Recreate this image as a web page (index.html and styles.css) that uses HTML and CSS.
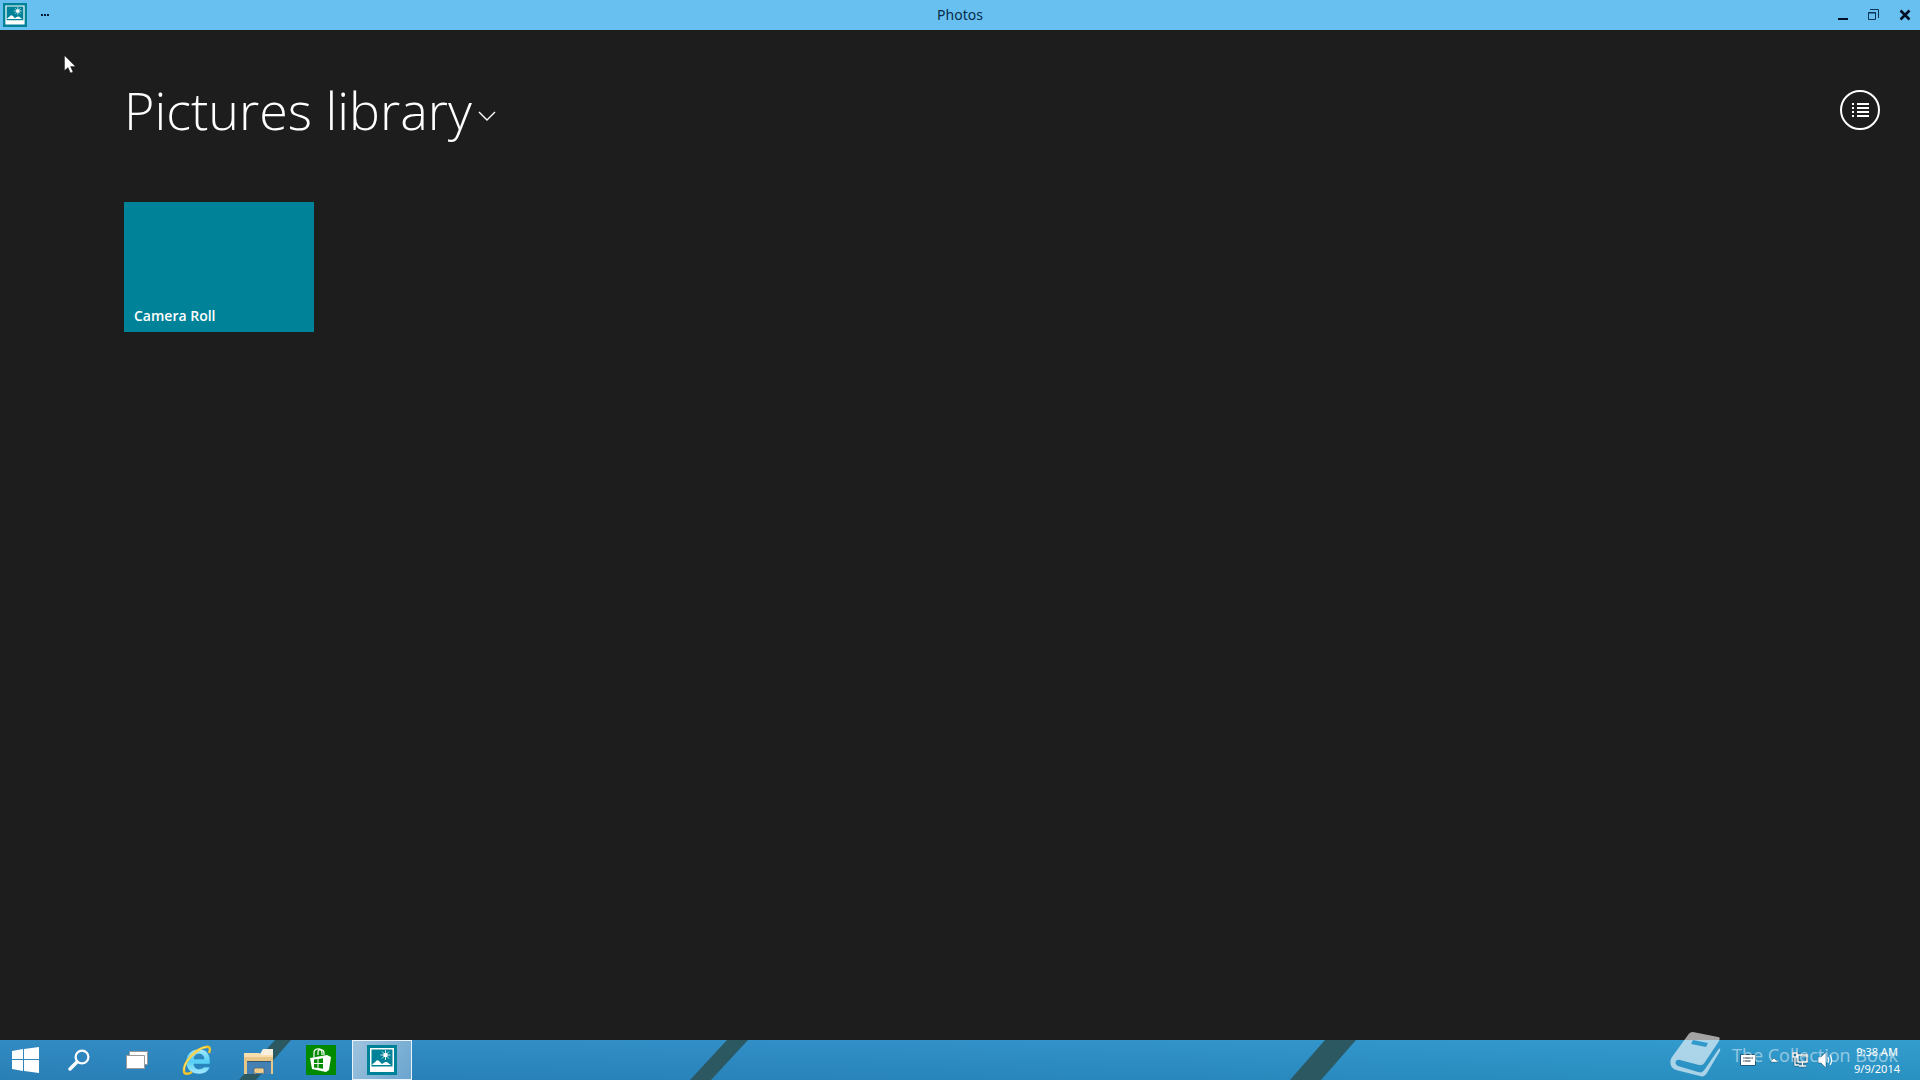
FILE: index.html
```html
<!DOCTYPE html>
<html lang="en">
<head>
    <meta charset="UTF-8">
    <meta name="viewport" content="width=device-width, initial-scale=1.0">
    <title>Photos</title>
    <link rel="stylesheet" href="styles.css">
</head>
<body>
    <!-- Photo glyph shared by title bar and taskbar -->
    <svg class="defs" width="0" height="0" aria-hidden="true">
        <symbol id="photo" viewBox="0 0 30 30">
            <rect width="30" height="30" fill="#008299"/>
            <path d="M3 3h24v24H3z M4.500 4.500v17h21v-17z" fill="#fff" fill-rule="evenodd"/>
            <path d="M5 20c1-2 3-2 4-4 1-1 2-1 3 0l3 3c2-1 2-2 4-2 2 0 3 2 5 3z" fill="#fff"/>
            <circle cx="18.500" cy="10" r="2.200" fill="#fff"/>
            <path d="M18.500 5v10M13.500 10h10M15 6.500l7 7M22 6.500l-7 7" stroke="#fff" stroke-width=".8"/>
        </symbol>
    </svg>

    <!-- Title bar -->
    <header class="title-bar">
        <div class="title-left">
            <svg class="app-icon" viewBox="0 0 30 30"><use href="#photo"/></svg>
            <button class="btn-more" aria-label="App commands">
                <svg width="8" height="2" viewBox="0 0 8 2"><path d="M0 0h2v2H0zM3 0h2v2H3zM6 0h2v2H6z" fill="#001a33"/></svg>
            </button>
        </div>
        <div class="title-text">Photos</div>
        <div class="window-buttons">
            <button aria-label="Minimize">
                <svg width="12" height="12" viewBox="0 0 12 12"><path d="M1 9h10v2H1z" fill="#001026"/></svg>
            </button>
            <button aria-label="Restore">
                <svg width="12" height="12" viewBox="0 0 12 12" fill="none" stroke="#0b3557">
                    <path d="M.5 3.500h7v7h-7zM0 4h8M2 .5h8.500V9" />
                </svg>
            </button>
            <button aria-label="Close">
                <svg width="12" height="12" viewBox="0 0 12 12"><path d="M1.500 1.500l9 9M10.500 1.500l-9 9" stroke="#001026" stroke-width="2.600"/></svg>
            </button>
        </div>
    </header>

    <!-- Library view -->
    <main class="library">
        <div class="library-header">
            <h1>
                <button class="library-menu" aria-haspopup="true">Pictures library
                    <svg width="18" height="10" viewBox="0 0 18 10"><path d="M1 1l8 8 8-8" fill="none" stroke="#fff" stroke-width="1.400"/></svg>
                </button>
            </h1>
            <button class="btn-details" aria-label="Details view">
                <svg width="17" height="14" viewBox="0 0 17 14"><path d="M0 0h2v2H0zM5 0h12v2H5zM0 4h2v2H0zM5 4h12v2H5zM0 8h2v2H0zM5 8h12v2H5zM0 12h2v2H0zM5 12h12v2H5z" fill="#fff"/></svg>
            </button>
        </div>
        <div class="folders">
            <a class="folder" href="#camera-roll">Camera Roll</a>
        </div>
    </main>

    <!-- Taskbar -->
    <footer class="taskbar">
        <svg class="wallpaper" viewBox="0 0 1920 40" preserveAspectRatio="none" aria-hidden="true">
            <path d="M275 0h16l-35 40h-17zM727 0h21l-37 40h-21zM1325 0h31l-35 40h-31z" fill="#2c5862"/>
        </svg>

        <nav class="tasks">
            <button class="task task-start" aria-label="Start">
                <svg width="27" height="26" viewBox="0 0 27 26" fill="#fff"><path d="M0 4l11-2v10H0zM12 2l15-2v12H12zM0 13h11v11L0 22zM12 13h15v13l-15-2z"/></svg>
            </button>
            <button class="task task-search" aria-label="Search">
                <svg width="22" height="22" viewBox="0 0 22 22" fill="none" stroke="#fff"><circle cx="14" cy="8" r="6.400" stroke-width="2.200"/><path d="M9 13l-7 7" stroke-width="3.400" stroke-linecap="round"/></svg>
            </button>
            <button class="task task-view" aria-label="Task view">
                <svg width="22" height="18" viewBox="0 0 22 18" fill="#fff" stroke="#9a9a9a"><path d="M3.500.5h18v13h-18z"/><path d="M.5 4.500h18v13H.5z"/></svg>
            </button>
            <button class="task task-ie" aria-label="Internet Explorer">
                <svg width="30" height="32" viewBox="0 0 30 32">
                    <defs><linearGradient id="ie" x2="0" y2="1"><stop offset="0" stop-color="#a9ecfb"/><stop offset=".5" stop-color="#55cdf4"/><stop offset="1" stop-color="#a6ebff"/></linearGradient></defs>
                    <path d="M28 20H12c0 3 2 5 5 5 2 0 4-1 5-2h6c-2 5-6 7-11 7C9 30 4 25 4 18S9 5 17 5s12 6 11 15zM12 15h10c0-3-2-5-5-5s-5 2-5 5z" fill="url(#ie)" stroke="#1d86bf" stroke-width=".6"/>
                    <path d="M27 9c2-4 1-7-3-6C15 4 1 18 2 27c0 4 5 3 8 1" fill="none" stroke="#f4c52b" stroke-width="2.400"/>
                    <path d="M24 3C15 4 2 17 2 26" fill="none" stroke="#ffe57a" stroke-width="1"/>
                </svg>
            </button>
            <button class="task task-explorer" aria-label="File Explorer">
                <svg width="30" height="26" viewBox="0 0 30 26">
                    <path d="M16 5l3-5h10v8H16z" fill="#f7f0df"/>
                    <path d="M0 4h15l2 2h12v19h-2V12H3v13H0z" fill="#e8c687"/>
                    <path d="M0 4h15l2 2h12v2H0z" fill="#f8dfad"/>
                    <path d="M3 12h24v13H3z" fill="#4381b5"/>
                    <path d="M3 12h24v1H3z" fill="#35566f"/>
                    <path d="M10 25v-5l1-1h8l1 1v5h-2v-2h-6v2z" fill="#f5d396" stroke="#4a6578" stroke-width=".8"/>
                    <path d="M12 20h6v4h-6z" fill="#f0c983"/>
                </svg>
            </button>
            <button class="task task-store" aria-label="Store">
                <svg width="30" height="30" viewBox="0 0 30 30">
                    <path d="M0 0h30v30H0z" fill="#008a00"/>
                    <path d="M4 13l17-3 4 2-2 13-3 2-14-3z" fill="#fff"/>
                    <path d="M8 12V8c0-5 8-6 8 0v2M12 10V7c0-4 6-3 6 1v2" fill="none" stroke="#fff" stroke-width="1.200"/>
                    <path d="M8 14.400l3.500-.4v4H8zM12.500 13.900l4.500-.6V18h-4.500zM8 19h3.500v4L8 22.500zM12.500 19H17v4.700l-4.500-.6z" fill="#008a00"/>
                </svg>
            </button>
            <button class="task task-photos active" aria-label="Photos">
                <svg width="30" height="30" viewBox="0 0 30 30"><use href="#photo"/></svg>
            </button>
        </nav>

        <div class="tray">
            <button aria-label="Touch keyboard">
                <svg width="16" height="12" viewBox="0 0 16 12"><path d="M.5.500h15v11H.5z" fill="#fff" stroke="#245878"/><path d="M3 4h10M3 7h8" stroke="#234"/></svg>
            </button>
            <button aria-label="Show hidden icons">
                <svg width="10" height="6" viewBox="0 0 10 6"><path d="M1 5l4-4 4 4z" fill="#fff" stroke="#245878" stroke-width=".6"/></svg>
            </button>
            <button aria-label="Network">
                <svg width="16" height="16" viewBox="0 0 16 16" fill="none">
                    <path d="M6 3h9v7H6zM10.500 10v4M7 14h7M3 6v7h4M1 1h4v4H1z" stroke="#17455f" stroke-width="2.600"/>
                    <path d="M6 3h9v7H6zM10.500 10v4M7 14h7M3 6v7h4M1 1h4v4H1z" stroke="#fff" stroke-width="1.400"/>
                </svg>
            </button>
            <button aria-label="Volume">
                <svg width="16" height="16" viewBox="0 0 16 16"><path d="M0 5h3l5-5v16l-5-5H0z" fill="#fff" stroke="#245878" stroke-width=".6"/><path d="M10 5c1 2 1 4 0 6M12 3c2 3 2 7 0 10" fill="none" stroke="#fff" stroke-width="1.100"/></svg>
            </button>
            <button class="clock"><span>9:38 AM</span><span>9/9/2014</span></button>
        </div>
    </footer>

    <!-- Watermark lies over the taskbar -->
    <div class="watermark">
        <svg width="52" height="48" viewBox="0 0 52 48">
            <path d="M23 1l25 5c2 0 2 2 1 4L35 31c-2 3-3 3-6 3L10 29c-5-1-6 4-2 6l20 6c3 1 5 0 7-3l13-19c1-2 3-2 2 1L37 42c-2 3-4 4-7 3L6 39c-6-2-7-8-4-13L18 4c1-2 3-3 5-3zM23 9l-2 4 15 3 2-4z" fill="#fff" fill-rule="evenodd"/>
        </svg>
        <span>The Collection Book</span>
    </div>

    <svg class="cursor" width="12" height="19" viewBox="0 0 12 19" aria-hidden="true"><path d="M.5.500v15l3.500-3 2.500 5.500 2.500-1-2.500-5.500h5z" fill="#fff" stroke="#111" stroke-width=".4"/></svg>
</body>
</html>
```

FILE: styles.css
```css
* {
    box-sizing: border-box;
}

/* Page style */
body {
    margin: 0;
    min-height: 100vh;
    display: flex;
    flex-direction: column;
    position: relative;
    background: #1d1d1d;
    font-family: "Open Sans", "Noto Sans", sans-serif;
    color: white;
}

button {
    padding: 0;
    border: none;
    background: none;
    color: inherit;
    font: inherit;
    display: flex;
    align-items: center;
    justify-content: center;
}

svg {
    display: block;
    flex: none;
}

.defs {
    position: absolute;
}

/* Title bar */
.title-bar {
    height: 30px;
    display: grid;
    grid-template-columns: 1fr auto 1fr;
    align-items: center;
    background: #68c0f0;
    color: #062b49;
}

.title-left {
    display: flex;
    align-items: center;
    padding-left: 3px;
}

.app-icon {
    width: 24px;
    height: 24px;
}

.btn-more {
    width: 36px;
    height: 24px;
}

.title-text {
    font-family: "Noto Sans", sans-serif;
    font-size: 14px;
    line-height: 30px;
}

.window-buttons {
    display: flex;
    justify-content: flex-end;
}

.window-buttons button {
    width: 31px;
    height: 30px;
}

/* Library view */
.library {
    flex: 1;
    padding: 40px 40px 40px 124px;
}

.library-header {
    height: 80px;
    display: flex;
    align-items: center;
    justify-content: space-between;
}

h1 {
    margin: 0;
    font-size: 52px;
    font-weight: 300;
    line-height: 80px;
}

.library-menu {
    gap: 6px;
}

.library-menu svg {
    margin-top: 12px;
}

.btn-details {
    width: 40px;
    height: 40px;
    border: 2px solid white;
    border-radius: 50%;
}

.folders {
    display: flex;
    flex-wrap: wrap;
    gap: 10px;
    padding-top: 52px;
}

.folder {
    width: 190px;
    height: 130px;
    padding: 6px 10px;
    display: flex;
    align-items: flex-end;
    background: #008299;
    color: white;
    font-size: 14px;
    font-weight: 600;
    line-height: 20px;
    text-decoration: none;
}

/* Taskbar */
.taskbar {
    height: 40px;
    display: flex;
    justify-content: space-between;
    position: relative;
    background: linear-gradient(rgba(255, 255, 255, 0.04), rgba(0, 0, 0, 0.05)), linear-gradient(90deg, #2a86c0, #2a8bc5 45%, #2b99cc);
}

.wallpaper {
    position: absolute;
    width: 100%;
    height: 100%;
}

.tasks,
.tray {
    display: flex;
    align-items: center;
    position: relative;
}

.task {
    width: 62px;
    height: 40px;
}

.task-start {
    width: 50px;
}

.task-search,
.task-view {
    width: 58px;
}

.task-photos {
    width: 60px;
    height: 40px;
}

.task-explorer svg {
    margin-top: 4px;
}

.active {
    border: 1px solid #e8f3fb;
    background: linear-gradient(120deg, #9fc3de, #6aa5cf);
}

/* Tray icons and clock */
.tray {
    gap: 10px;
    padding-right: 20px;
}

.tray button {
    min-width: 16px;
    height: 40px;
}

.tray .clock {
    margin-left: 10px;
    flex-direction: column;
    font-family: "Noto Sans", sans-serif;
    font-size: 11px;
    line-height: 17px;
}

/* Watermark */
.watermark {
    position: absolute;
    right: 22px;
    bottom: 1px;
    height: 48px;
    display: flex;
    align-items: center;
    gap: 10px;
    font-size: 18px;
    opacity: 0.6;
    pointer-events: none;
}

.watermark span {
    opacity: 0.8;
}

/* Mouse pointer */
.cursor {
    position: absolute;
    left: 64px;
    top: 55px;
}
```
